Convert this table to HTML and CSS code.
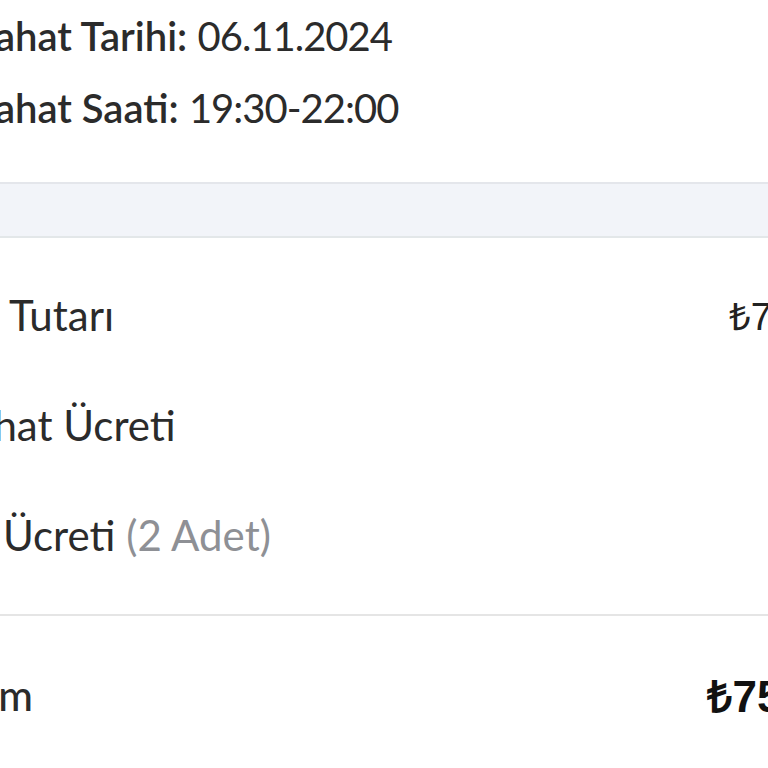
FILE: index.html
```html
<!DOCTYPE html>
<html>
<head>
    <title>Sipariş Özeti</title>
    <link rel="stylesheet" href="styles.css">
</head>
<body>
    <div class="sheet">
        <!-- trip info -->
        <div class="trip-info">
            <p><b>Seyahat Tarihi:</b> <span class="value">06.11.2024</span></p>
            <p><b>Seyahat Saati:</b> <span class="value">19:30-22:00</span></p>
        </div>

        <div class="band"></div>

        <!-- price lines -->
        <ul class="price-list">
            <li><span>Ürün Tutarı</span><span class="amount">₺700,00</span></li>
            <li><span>Seyahat Ücreti</span><span class="amount">₺0,00</span></li>
            <li><span>Valiz Ücreti <em>(2 Adet)</em></span><span class="amount">₺0,00</span></li>
        </ul>

        <div class="total">
            <span>Toplam</span>
            <span class="amount">₺750,00</span>
        </div>
    </div>
</body>
</html>
```

FILE: styles.css
```css
* {
  padding: 0;
  margin: 0;
  list-style: none;
}

body {
  font-family: Lato, "Noto Sans", sans-serif;
  background: #ffffff;
  color: #2b2b2b;
  overflow: hidden;
}

/* the sheet is wider than the window, so both sides are cut */
.sheet {
  width: 967px;
  margin-left: -100px;
}

/* trip info */
.trip-info {
  font-size: 40px;
  line-height: 72px;
  padding: 0 0 38px 32px;
}

.trip-info b {
  font-weight: 600;
}

.trip-info .value {
  letter-spacing: -1px;
}

.band {
  height: 52px;
  background: #f2f4f9;
  border-top: 2px solid #e4e6eb;
  border-bottom: 2px solid #e3e7e9;
}

/* price lines */
.price-list {
  padding: 22px 0 24px 7px;
  border-bottom: 2px solid #e5e5e5;
}

.price-list li {
  display: flex;
  justify-content: space-between;
  align-items: center;
  height: 110px;
  font-size: 42px;
}

.price-list em {
  font-style: normal;
  color: #8e9095;
}

.amount {
  font-family: "Liberation Sans", Arial, sans-serif;
  font-size: 38px;
  color: #222222;
}

/* total */
.total {
  display: flex;
  justify-content: space-between;
  align-items: center;
  height: 110px;
  padding-top: 24px;
  font-size: 42px;
  font-weight: 500;
}

.total .amount {
  font-size: 44px;
  font-weight: 700;
  color: #111111;
}
```
